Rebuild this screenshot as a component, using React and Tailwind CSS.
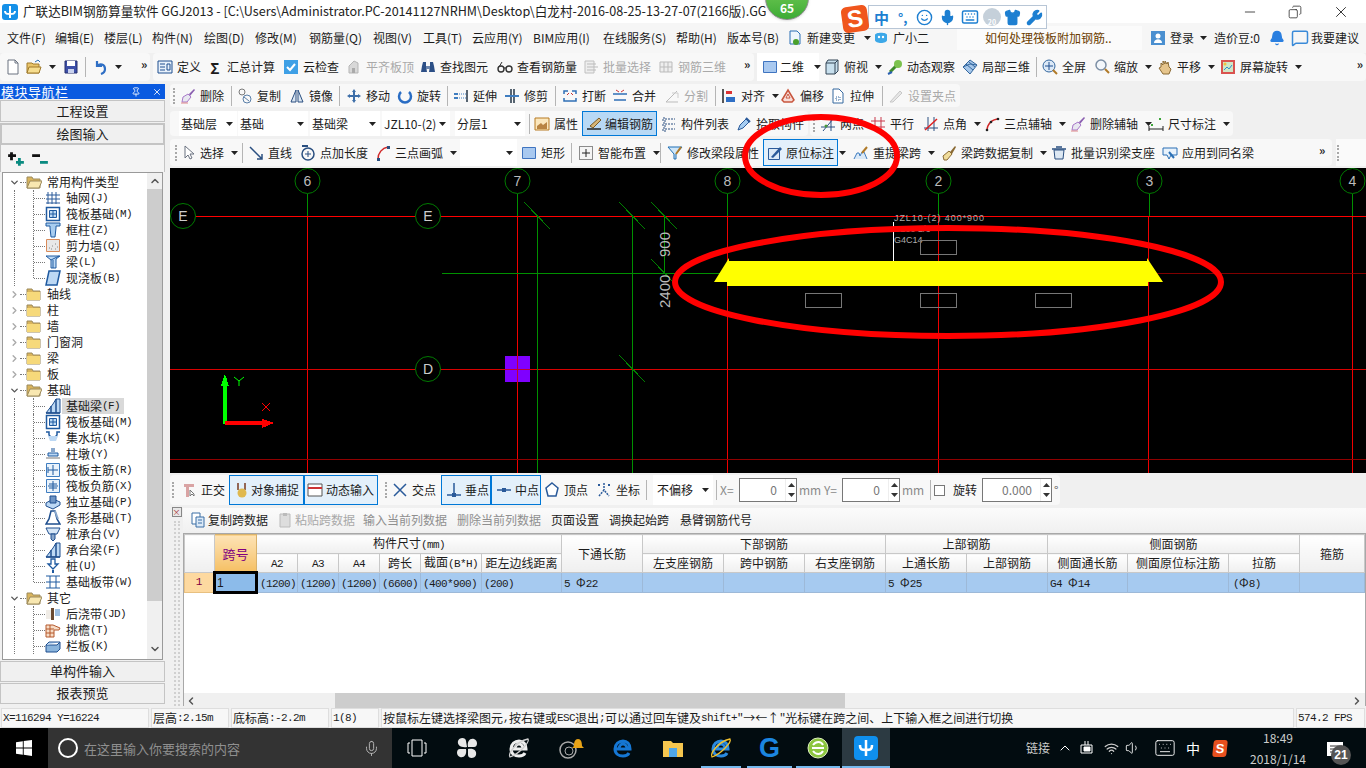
import React from 'react';
import { Smile, Mic, Keyboard, Shirt, Wrench, Bell, Wifi, Volume1, ChevronUp, ChevronDown, ChevronLeft, ChevronRight, Copy, Minus, X, Pin, MessageSquare } from 'lucide-react';

const B = '#2f6fb5', D = '#1f4f8f';
const ICONS = {
  new: <><path d="M3 1h7l3 3v11H3z" fill="#fff" stroke="#6b7280"/><path d="M10 1v3h3" fill="none" stroke="#6b7280"/></>,
  open: <><path d="M1 4h5l1 1h6v9H1z" fill="#e9c46a" stroke="#a07a2c"/><path d="M3 8h12l-2 6H1z" fill="#f6dd8f" stroke="#a07a2c"/><path d="M9 3l3-2 2 2" fill="none" stroke={B}/></>,
  save: <><path d="M2 2h12v12H2z" fill="#3d4fa8" stroke="#26306e"/><path d="M4 2h8v5H4z" fill="#fff"/><path d="M5 10h6v4H5z" fill="#c9d2ee"/></>,
  undo: <path d="M5 2v5h5M5 7c3-3 8-2 8 3 0 2-1 4-4 5" fill="none" stroke="#2f6fc5" strokeWidth="2.2"/>,
  def: <><path d="M1 2h14v12H1z" fill="#e8f1fb" stroke={D}/><path d="M3 5h5M3 8h5M3 11h5M10 5h3v6h-3z" fill="none" stroke={D}/></>,
  cloud: <><path d="M1 1h14v14H1z" fill="#3fa0e6" rx="2"/><path d="M4 8l3 3 5-6" fill="none" stroke="#fff" strokeWidth="2"/></>,
  flush: <><path d="M3 7l5-5 4 2v10H3z" fill="#d8d8d8" stroke="#b5b5b5"/><path d="M6 9h3v5H6z" fill="#aaa"/></>,
  binoc: <><path d="M3 3h3v4l1 6H1l1-6zM10 3h3l1 4 1 6H9l1-6z" fill="#2c4f86"/><path d="M6 7h4v3H6z" fill="#6d86ad"/></>,
  glass: <><circle cx="4" cy="10" r="3" fill="none" stroke="#333" strokeWidth="1.4"/><circle cx="12" cy="10" r="3" fill="none" stroke="#333" strokeWidth="1.4"/><path d="M7 9h2M2 8l3-5" stroke="#333" fill="none"/></>,
  batch: <><path d="M2 2h9v12H2z" fill="#eee" stroke="#c0c0c0"/><path d="M4 5h9M4 8h11M4 11h9" stroke="#bbb"/></>,
  r3d: <path d="M2 3h12v10H2zM6 3v10M10 3v10M2 8h12" fill="#eee" stroke="#bbb"/>,
  v2d: <path d="M1.500 2.500h13v11h-13z" fill="#a9c9f0" stroke="#3f74c0"/>,
  box: <><path d="M4 1h10v11l-3 3H2V4z" fill="#c8e0ee" stroke="#345"/><path d="M2 4h9v11M11 4l3-3" fill="none" stroke="#345"/></>,
  orbit: <><path d="M3 13L13 3" stroke="#3e8a2c" strokeWidth="3"/><circle cx="11" cy="5" r="4" fill="#7cc24e"/><path d="M1 15l4-2" stroke="#2a5fb0" strokeWidth="2"/></>,
  cube: <><path d="M8 1l7 5-7 9-7-7z" fill="#a6c7ea" stroke="#35689f"/><path d="M4 5l7 6M7 3l6 5M1 8l7-3 7 1" stroke="#35689f" fill="none"/></>,
  full: <><circle cx="7" cy="7" r="6" fill="#dce9f7" stroke="#35689f"/><path d="M7 3v8M3 7h8" stroke="#1f4f8f"/><path d="M11 11l4 4" stroke="#b07a28" strokeWidth="2"/></>,
  zoom: <><circle cx="7" cy="6" r="5" fill="#f3f7fb" stroke="#7c8fa5" strokeWidth="1.500"/><path d="M11 10l4 4" stroke="#b07a28" strokeWidth="2"/></>,
  pan: <path d="M4 8V4l2 2V2l2 3V2l2 3 1-2 1 5 2 2-2 5H6L2 9z" fill="#e6c58c" stroke="#8a6a34"/>,
  rot: <><path d="M2 2h12v12H2z" fill="#cfe7c7" stroke="#d9534f" strokeWidth="2"/><path d="M4 11l3-3 2 2 3-4" stroke="#2f8fce" fill="none"/><circle cx="5" cy="5" r="1.500" fill="#f0c040"/></>,
  erase: <><path d="M9 6l5-5 1 1-5 6z" fill="#8a5fb0"/><path d="M3 9l5-3 3 3-4 5H2z" fill="#e8e8f0" stroke="#a879c9"/><path d="M1 15h7" stroke="#d88"/></>,
  copy: <><circle cx="5" cy="4" r="3" fill="none" stroke="#7a7a7a"/><circle cx="10" cy="11" r="4" fill="none" stroke="#5a7fa8"/><path d="M7 9l5 4" stroke="#5a7fa8"/></>,
  mirror: <path d="M7 2L2 14h5zM9 2l5 12H9z" fill="#dbe6f2" stroke="#2a4f80"/>,
  move: <path d="M8 1l2 3H9v3h3V6l3 2-3 2V9H9v3h1l-2 3-2-3h1V9H4v1L1 8l3-2v1h3V4H6z" fill="#3d6ea8"/>,
  rot2: <path d="M12 4a6 6 0 1 1-8 0" fill="none" stroke="#2a6dc4" strokeWidth="2.500"/>,
  extend: <><path d="M14 2v12" stroke="#234" strokeWidth="1.500"/><path d="M1 5h4v2H1zM1 9h4v2H1z" fill="#3f7dc0"/><path d="M6 6h7M6 10h7" stroke="#3f7dc0" strokeDasharray="1 1"/></>,
  trim: <><path d="M7 1v14M10 1v14" stroke="#234" strokeWidth="1.500"/><path d="M1 8h14" stroke="#3f7dc0" strokeWidth="2"/></>,
  brk: <><path d="M2 6V3h4M10 3h4v3M2 10v3h12v-3" fill="none" stroke={B} strokeWidth="1.500"/><path d="M5 7l2-2M11 7L9 5" stroke="#c33"/></>,
  mrg: <><path d="M1 6h14M2 12h12" stroke={B} strokeWidth="1.500"/><path d="M4 2l3 2M12 2L9 4" stroke="#c33"/></>,
  split: <><path d="M2 14L13 3M2 14h12" stroke="#bbb" fill="none"/><path d="M8 5h6v5" stroke="#ccc" fill="none"/></>,
  align: <><path d="M2 1v14" stroke="#222" strokeWidth="1.500"/><path d="M5 3h6v3H5z" fill="#d33"/><path d="M5 9h9v5H5z" fill="#2f6fc5"/></>,
  offset: <><path d="M8 2l6 10-2 2H4l-2-2z" fill="#f7dcd8" stroke="#c8553d" strokeWidth="1.500"/><path d="M8 6l2 4H6z" fill="#fff" stroke="#c8553d"/></>,
  stretch: <><path d="M3 1h6l4 4v10H3z" fill="#fff" stroke="#35689f"/><path d="M6 9h4v3H6z" fill="none" stroke="#35689f" strokeDasharray="1 1"/></>,
  grip2: <path d="M2 14L12 3l2 2L5 14z" fill="#e6e6e6" stroke="#c8c8c8"/>,
  attr: <><path d="M1 2h14v12H1z" fill="#fbe7bd" stroke="#b77b23"/><path d="M3 10l4-3 2 2 4-3v7H3z" fill="#b98443"/></>,
  edit: <><path d="M1 13h14" stroke="#222" strokeWidth="1.500"/><path d="M4 10L13 2l2 2-8 8z" fill="#d7b676" stroke="#7a5a26"/></>,
  list: <path d="M2 2h3v3H2zM7 3h7M2 7h3v3H2zM7 8h7M2 12h3v3H2zM7 13h7" fill="none" stroke="#2a4f80" strokeDasharray="2 1"/>,
  pick: <><path d="M2 14l2-5 6-6 3 3-6 6z" fill="#a6cdf2" stroke="#2a5a9a"/><path d="M10 2l4 4" stroke="#2a5a9a" strokeWidth="2"/></>,
  two: <><path d="M1 11h14M11 1v14M3 15L13 3" stroke="#2a4f80"/><circle cx="6" cy="10" r="1.500" fill="#4a9a3a"/></>,
  para: <path d="M5 1v14M11 1v14M1 5h14M1 11h14" stroke="#c8384a"/>,
  angle: <><path d="M5 1v14M11 1v14M1 12h14" stroke="#2a4f80"/><path d="M2 14L14 3" stroke="#e02020" strokeWidth="1.500"/></>,
  arc3: <><path d="M3 15C3 8 8 3 15 3" fill="none" stroke="#d02828" strokeWidth="1.500"/><circle cx="3" cy="14" r="1.300" fill="#222"/><circle cx="7" cy="6" r="1.300" fill="#222"/><circle cx="14" cy="3" r="1.300" fill="#222"/></>,
  dim: <><path d="M1 10v5M15 10v5M1 13h14" stroke="#222" fill="none"/><path d="M3 8h2v2H3zM11 2h2v2h-2z" fill="#3da53a"/></>,
  cursor: <path d="M5 1v12l3-3 2 4 2-1-2-4h4z" fill="#fff" stroke="#6b7280"/>,
  line: <path d="M2 2l12 12M14 9v5H9" fill="none" stroke="#2a4f80" strokeWidth="1.500"/>,
  ptl: <><circle cx="8" cy="9" r="6" fill="none" stroke="#2a4f80" strokeWidth="1.500"/><path d="M8 6v6M5 9h6" stroke="#2a4f80"/><path d="M2 1h6" stroke="#2a4f80" strokeWidth="2"/></>,
  arc: <><path d="M3 14C3 8 7 3 13 2" fill="none" stroke="#d02828" strokeWidth="1.500"/><path d="M2 13h3v3H2zM12 1h3v3h-3z" fill="#2a4f80"/></>,
  smart: <><path d="M1.500 1.500h13v13h-13z" fill="#f5f5f5" stroke="#222" strokeDasharray="1 1"/><path d="M8 4v8M4 8h8" stroke="#222"/></>,
  modify: <><path d="M1 2h14L9 9v5H7V9z" fill="#cfe6f8" stroke="#1e6fb5"/><path d="M9 9l5-7" stroke="#b07a28" strokeWidth="2"/></>,
  origin: <><path d="M1.500 3.500h11v11h-11z" fill="#dbe9f7" stroke="#2a5a9a"/><path d="M4 12L13 2l2 2-9 9z" fill="#2a5a9a"/></>,
  reuse: <><path d="M1 14l3-6h2l1 3 2-4h2l3 7" fill="#dbe9f7" stroke="#3f7dc0"/><path d="M9 8l5-6" stroke="#b07a28" strokeWidth="2"/></>,
  brush: <><path d="M9 7l5-6 1 1-4 7z" fill="#8a6a34"/><path d="M2 11l6-5 3 3-5 6H3z" fill="#f0dc9a" stroke="#8a6a34"/></>,
  batchid: <><path d="M3 5h10l-1 9H4z" fill="#dde8f3" stroke="#2a4f80"/><path d="M1 4h14M5 2h6" stroke="#2a4f80" strokeWidth="1.500"/></>,
  apply: <><path d="M1 3h14v7H9l-2 4-2-4H1z" fill="#e8f2fb" stroke="#2a6fb5"/><path d="M7 7l5 6" stroke="#2a6fb5" strokeWidth="2"/></>,
  ortho: <><path d="M3 2h10v3H8v10H5V5H3z" fill="#d9a3a3"/><path d="M9 8v6l2-2 2 2v-2l-2-2z" fill="#fff" stroke="#777"/></>,
  snap: <><path d="M5 1v7M12 1v7" stroke="#7a3a20" strokeWidth="1.500"/><circle cx="9" cy="11" r="4.500" fill="#e0b94f"/></>,
  dyn: <><path d="M1 2h14v12H1z" fill="#fff" stroke="#555"/><path d="M1 6h14" stroke="#c33" strokeWidth="2"/></>,
  cross: <path d="M2 2l12 12M14 2L2 14" stroke="#2a5a9a" strokeWidth="1.500"/>,
  perp: <><path d="M8 1v12M1 13h14" stroke="#2a5a9a" strokeWidth="1.500"/><path d="M6 11h4v4H6z" fill="#2a5a9a"/></>,
  mid: <><path d="M1 8h14" stroke="#2a5a9a" strokeWidth="1.500"/><path d="M6 6h4v4H6z" fill="#2a5a9a"/></>,
  vert: <path d="M8 1l6 5-2 8H4L2 6z" fill="#fff" stroke="#2a5a9a" strokeWidth="1.500"/>,
  coord: <><path d="M3 14L8 8l5 6M8 1v7" fill="none" stroke="#2a5a9a" strokeDasharray="2 1" strokeWidth="1.500"/><path d="M2 2h2v2H2zM12 2h2v2h-2z" fill="#2a5a9a"/></>,
  doc: <><path d="M3 1h7l3 3v10H3z" fill="#eef5fc" stroke="#2a6fb5"/><circle cx="9" cy="12" r="3" fill="#4aa02c"/></>,
  bot: <><path d="M2 5c0-3 12-3 12 0v5c0 4-12 4-12 0z" fill="#3ca8e8"/><circle cx="6" cy="7" r="1.200" fill="#fff"/><circle cx="10" cy="7" r="1.200" fill="#fff"/></>,
  user: <><path d="M1 1h14v14H1z" fill="#4a8fd0"/><circle cx="8" cy="6" r="2.500" fill="#fff"/><path d="M4 13c0-5 8-5 8 0z" fill="#fff"/></>,
  paste: <><path d="M3 2h10v13H3z" fill="#ddd" stroke="#bbb"/><path d="M6 1h4v3H6z" fill="#bbb"/></>,
  copy2: <><path d="M2 1h8v11H2z" fill="#fff" stroke="#3a6ea5"/><path d="M6 5h8v10H6z" fill="#dbe9f7" stroke="#3a6ea5"/><path d="M8 8h4M8 11h4" stroke="#3a6ea5"/></>,
  grid: <path d="M3 2v12M7 2v12M11 2v12M1 5h14M1 9h14M1 13h14" stroke="#2a5a9a" fill="none"/>,
  raft: <><path d="M1.500 1.500h13v13h-13z" fill="#fff" stroke="#1f5aa0" strokeWidth="1.500"/><path d="M4.500 4.500h7v7h-7z" fill="#bcd8f4" stroke="#1f5aa0"/><path d="M8 4v8M4 8h8" stroke="#1f5aa0"/></>,
  col: <path d="M1 1h14v3h-4v2l-1 9H6L5 6V4H1z" fill="#a8cdf0" stroke="#1f5aa0"/>,
  wall: <><path d="M1.500 1.500h13v12h-13z" fill="#e8e8e8" stroke="#d98b5a"/><path d="M4 10h1M7 8h1M10 11h1M6 11h1M10 6h1M12 9h1" stroke="#888"/></>,
  beam: <><path d="M1 2h14l-4 3v9H6V6z" fill="#bcd8f4" stroke="#1f5aa0"/><path d="M6 6l8-4M8 6v8" stroke="#1f5aa0"/></>,
  slab: <path d="M4 1h11l-3 14H1z" fill="#bcd8f4" stroke="#1f5aa0" strokeWidth="1.500"/>,
  fbeam: <><path d="M1 15L8 6l3-5h4v14z" fill="#bcd8f4" stroke="#1f4f8f"/><path d="M1 15h14M6 15V8M11 1v14" stroke="#1f4f8f" strokeWidth="1.500"/></>,
  pit: <><path d="M1 2h3v3l2 2h4l2-2V2h3" fill="none" stroke="#1f5aa0" strokeWidth="1.500"/><path d="M3 6l2 5h6l2-5" fill="#bcd8f4"/></>,
  pier: <><path d="M6 2h4v4H6z" fill="#8aa8cc"/><path d="M3 7h10v3H3z" fill="#bcd8f4" stroke="#1f5aa0"/><path d="M1 11h14v2H1z" fill="#bbb"/></>,
  rr: <><path d="M1.500 1.500h13v13h-13z" fill="#eaf3fb" stroke="#3f7dc0"/><path d="M8 3v10M3 8h10M3 5v6" stroke="#1f5aa0"/></>,
  rn: <><path d="M1.500 1.500h13v13h-13z" fill="#eaf3fb" stroke="#3f7dc0"/><path d="M8 3v10M3 8h10M4 6h8M4 10h8" stroke="#1f5aa0"/></>,
  iso: <><path d="M1 9l7-4 7 3v3l-7 4-7-3z" fill="#bcd8f4" stroke="#1f4f8f"/><path d="M5 2h6v7H5z" fill="#6d94c4" stroke="#1f4f8f"/></>,
  strip: <><path d="M6 1h4l2 8 3 5H1l3-5z" fill="#fff" stroke="#1f4f8f" strokeWidth="1.500"/><path d="M10 1l3 8" stroke="#8aa8cc" strokeWidth="2"/></>,
  cap: <><path d="M1 2h14l-3 6H4z" fill="#d7e7f7" stroke="#1f4f8f"/><path d="M6 8h4v5l-2 2-2-2z" fill="#8aa8cc" stroke="#1f4f8f"/></>,
  pile: <><path d="M6 1h4v5h3l-5 5-5-5h3z" fill="#fff" stroke="#1f5aa0" strokeWidth="1.300"/><path d="M7 12h2v3H7z" fill="#1f5aa0"/></>,
  band: <path d="M1 2h14M1 14h14M5 2v12M11 2v12M1 8h14" stroke="#1f5aa0" fill="none"/>,
  post: <><path d="M1 4h6v9H1z" fill="#f0ece6"/><path d="M6 2h3v12H6z" fill="#6b4a30"/><path d="M10 3h5v7h-5z" fill="#9fbfe0"/></>,
  eave: <><path d="M1 3h7l7 3-1 2H9v7H1z" fill="#f6dcc6" stroke="#b5582c"/><path d="M1 7h8M1 11h8M5 3v12" stroke="#b5582c"/></>,
  rail: <><path d="M1 7h11l3-3v7l-3 3H1z" fill="#8ab4dc" stroke="#1f4f8f"/><path d="M1 7l3-3h11" fill="#bcd8f4" stroke="#1f4f8f"/></>,
};
const Ic = ({ n }) => <svg viewBox="0 0 16 16" className="w-4 h-4 shrink-0 block">{ICONS[n]}</svg>;
const Caret = ({ cls = 'ml-[5px]' }) => <svg viewBox="0 0 7 4" className={`w-[7px] h-1 shrink-0 ${cls}`}><path d="M0 0h7L3.500 4z" fill="#222" /></svg>;
const Grip = ({ cls = '' }) => <div className={`w-0.5 h-4 shrink-0 border-l-2 border-dotted border-[#a8a8a8] ${cls}`} />;
const Sep = ({ cls = 'mx-[3px]' }) => <div className={`w-px h-5 shrink-0 bg-[#b5b5b5] ${cls}`} />;
const More = ({ cls = '' }) => <span className={`text-[12px] leading-none font-bold shrink-0 -mt-1.5 ${cls}`}>»</span>;

const T = ({ i, t, w, c, g, cls = '' }) => (
  <div className={`flex items-center h-full shrink-0 gap-1 whitespace-nowrap ${w} ${g ? 'text-[#a9a9a9]' : ''} ${cls}`}>
    {i && <Ic n={i} />}
    {t && <span>{t}</span>}
    {c && <Caret cls="ml-[3px]" />}
  </div>
);
const Combo = ({ t, w, cls = '' }) => (
  <div className={`flex items-center justify-between h-full bg-white shrink-0 pl-0.5 pr-1 ${w} ${cls}`}><span>{t}</span><Caret cls="" /></div>
);
const Group = ({ children, cls = '' }) => <div className={`flex items-center bg-[#f8f8f8] rounded-sm h-full ${cls}`}>{children}</div>;

const Sim = ({ t }) => t.split(/([\x20-\x7e]+)/).map((p, k) => /^[\x20-\x7e]+$/.test(p)
  ? <span key={k} className="font-['Liberation_Mono',monospace] text-[11px] tracking-[-0.6px] whitespace-pre">{p}</span>
  : <span key={k}>{p}</span>);

const Folder = ({ open }) => (
  <svg viewBox="0 0 16 14" className="w-4 h-3.5 shrink-0">
    <path d="M1 2h5l1 2h7v9H1z" fill="#d9b45c" stroke="#9c8a5c" />
    {open ? <path d="M4 6h12l-3 7H1z" fill="#f8e7b0" stroke="#9c8a5c" /> : <path d="M1 5h13v8H1z" fill="#f6d97a" />}
  </svg>
);
const FolderRow = ({ t, open }) => (
  <div className="flex items-center h-4">
    <div className="w-1.5 shrink-0" />
    {open ? <ChevronDown size={11} strokeWidth={3} className="text-[#555] shrink-0" /> : <ChevronRight size={11} strokeWidth={3} className="text-[#aaa] shrink-0" />}
    <div className="w-1.5 border-t border-dotted border-[#777] shrink-0" />
    <Folder open={open} />
    <span className="ml-[5px]">{t}</span>
  </div>
);
const Leaf = ({ i, t, last, sel }) => (
  <div className="flex items-center h-4">
    <div className="w-[12px] h-full shrink-0 border-r border-dotted border-[#777]" />
    {last
      ? <div className="w-[19px] h-2 self-start shrink-0 border-r border-dotted border-[#777]" />
      : <div className="w-[19px] h-full shrink-0 border-r border-dotted border-[#777]" />}
    <div className="w-[11px] border-t border-dotted border-[#777] shrink-0" />
    <Ic n={i} />
    <span className={`ml-[1px] pl-[4px] pr-1 h-4 flex items-center whitespace-nowrap ${sel ? 'bg-[#d9d9d9]' : ''}`}><Sim t={t} /></span>
  </div>
);
const PBtn = ({ t, cls = '' }) => (
  <div className={`flex items-center justify-center bg-[#f0f0f0] border border-[#c4c4c4] text-[13px] pb-0.5 ${cls}`}>{t}</div>
);

const Input = ({ v, w }) => (
  <div className={`h-6 bg-white border border-[#777] flex items-center justify-end shrink-0 text-[#777] ${w}`}>
    <span className="mr-2">{v}</span>
    <div className="w-[11px] h-full flex flex-col items-center justify-center gap-1.5 border-l border-[#eee]">
      <svg viewBox="0 0 7 4" className="w-[7px] h-1"><path d="M0 4h7L3.500 0z" fill="#333" /></svg>
      <svg viewBox="0 0 7 4" className="w-[7px] h-1"><path d="M0 0h7L3.500 4z" fill="#333" /></svg>
    </div>
  </div>
);

const Hd = ({ t, cls = '', ...r }) => (
  <th {...r} className={`font-normal border border-[#c8c8c8] bg-linear-to-b from-white to-[#efefef] p-0 text-center align-middle whitespace-nowrap overflow-hidden ${cls}`}><Sim t={t} /></th>
);
const Td = ({ t = '', cls = '' }) => (
  <td className={`border border-[#9db9d8] bg-[#a6caf0] p-0 pl-[2px] text-left whitespace-nowrap overflow-hidden ${cls}`}><Sim t={t} /></td>
);

const Canvas = () => {
  const ax = [[307, '6'], [517, '7'], [727, '8'], [938, '2'], [1149, '3'], [1352, '4']];
  const ticks = [[537, 216], [632, 216], [664, 216], [664, 273], [632, 369]];
  return (
    <svg viewBox="170 168 1196 305" className="w-full h-full block bg-black" shapeRendering="crispEdges">
      <path d="M307.500 216V473M517.500 216V473M727.500 216V473M938.500 216V473M1148.500 216V473M1352.500 216V473" stroke="#f00000" />
      <path d="M170 216.500H1366" stroke="#ff0000" strokeWidth="1" />
      <path d="M170 369.500H1366" stroke="#d80000" />
      <path d="M170 459.500H1366" stroke="#900000" />
      <path d="M537.500 216V473M632.500 216V473M664.500 216V273" stroke="#009000" />
      <path d="M442 273.500H727" stroke="#009000" />
      <path d="M727 273.500H1150" stroke="#6a6a6a" />
      <path d="M1150 273.500H1366" stroke="#800000" />
      {ax.map(([x]) => <path key={x} d={`M${x + 0.5} 194V216`} stroke="#009000" />)}
      {ticks.map(([x, y]) => <path key={x + '' + y} d={`M${x - 13} ${y - 14}L${x + 13} ${y + 13}`} stroke="#008000" />)}
      <g shapeRendering="auto">
        {ax.map(([x, l]) => (
          <g key={x}>
            <circle cx={x + 0.5} cy="181" r="12.500" fill="#000" stroke="#007a00" />
            <text x={x + 0.5} y="186" textAnchor="middle" fontSize="14" fill="#bbb" fontFamily="Liberation Sans">{l}</text>
          </g>
        ))}
        {[[183, 216, 'E'], [428, 216, 'E'], [428, 369, 'D']].map(([x, y, l]) => (
          <g key={x + l}>
            <circle cx={x} cy={y} r="12.500" fill="#000" stroke="#007a00" />
            <text x={x} y={y + 5} textAnchor="middle" fontSize="14" fill="#ccc" fontFamily="Liberation Sans">{l}</text>
          </g>
        ))}
        <text transform="translate(670 257) rotate(-90)" fontSize="15" fill="#bbb" fontFamily="Liberation Sans">900</text>
        <text transform="translate(670 308) rotate(-90)" fontSize="15" fill="#bbb" fontFamily="Liberation Sans">2400</text>
        <text x="894" y="221" fontSize="9" fill="#aaa" fontFamily="Liberation Sans" textLength="90">JZL10-(2)  400*900</text>
        <text x="894" y="232" fontSize="9" fill="#aaa" fontFamily="Liberation Sans">C200  2/6</text>
        <text x="894" y="243" fontSize="9" fill="#aaa" fontFamily="Liberation Sans">G4C14</text>
      </g>
      <rect x="505" y="356" width="25" height="26" fill="#7f00ff" />
      <path d="M517.500 356V382M505 369.500H530" stroke="#c00030" />
      <path d="M893.500 222V261" stroke="#fff" />
      <rect x="727" y="261" width="421" height="25" fill="#ff0" />
      <path d="M714 282L729 258V282zM1147 258L1163 282H1147z" fill="#ff0" shapeRendering="auto" />
      <g fill="none" stroke="#777">
        <rect x="920.500" y="240.500" width="36" height="14" />
        <rect x="805.500" y="293.500" width="36" height="14" />
        <rect x="920.500" y="293.500" width="36" height="14" />
        <rect x="1035.500" y="293.500" width="36" height="14" />
      </g>
      <rect x="223" y="378" width="4" height="46" fill="#0f0" />
      <path d="M225 374l4 12h-8z" fill="#0f0" />
      <rect x="225" y="421" width="40" height="4" fill="#f00" />
      <path d="M274 423l-12 5v-9z" fill="#f00" />
      <g shapeRendering="auto">
        <path d="M234 377l5 4 5-4M239 381v5" stroke="#0f0" fill="none" />
        <path d="M262 403l8 8M270 403l-8 8" stroke="#f00" fill="none" />
      </g>
    </svg>
  );
};

const TaskIcon = ({ children, cls = 'w-[49px]' }) => <div className={`h-full flex items-center justify-center shrink-0 ${cls}`}>{children}</div>;
const IeGlyph = ({ c, ring }) => (
  <svg viewBox="0 0 24 24" className="w-6 h-6">
    <path d="M5 13h14c0-5-3-8-7-8s-8 3-8 8 4 7 8 7c3 0 5-1 6-3M8 13c0-3 2-5 4-5s4 2 4 5" fill="none" stroke={c} strokeWidth="3" />
    {ring && <path d="M21 3C23 6 12 18 3 21 1 18 8 6 21 3z" fill="none" stroke={ring} strokeWidth="1.300" />}
  </svg>
);

export default function App() {
  return (
    <div className="relative w-[1366px] h-[768px] overflow-hidden flex flex-col bg-[#f0f0f0] text-[12px] leading-none text-[#1c1c1c] font-['Noto_Sans_CJK_SC','Noto_Sans',sans-serif]">
      {/* title */}
      <div className="h-[23px] shrink-0 bg-white flex items-center pl-[2px] text-[12.600px] text-[#222] whitespace-nowrap overflow-hidden">
        <svg viewBox="0 0 16 16" className="w-4 h-4 shrink-0"><rect width="16" height="16" rx="3" fill="#1490e8" /><path d="M8 2v12M3 7c0 3 2 3 5 3s5 0 5-3" fill="none" stroke="#fff" strokeWidth="2" /></svg>
        <span className="ml-[5px] w-[743px] shrink-0 overflow-hidden">广联达BIM钢筋算量软件 GGJ2013 - [C:\Users\Administrator.PC-20141127NRHM\Desktop\白龙村-2016-08-25-13-27-07(2166版).GGJ12]</span>
        <Minus size={16} strokeWidth={1.2} className="ml-[476px] shrink-0" />
        <Copy size={14} strokeWidth={1.3} className="ml-[30px] shrink-0 -scale-x-100 text-[#222]" />
        <X size={18} strokeWidth={1.2} className="ml-[30px] shrink-0" />
      </div>
      {/* menu */}
      <div className="h-[30px] shrink-0 bg-[#f6f6f6] flex items-center whitespace-nowrap">
        <div className="flex items-center pl-[7px] w-[787px] shrink-0">
          {[['文件(F)', 'w-[48px]'], ['编辑(E)', 'w-[49px]'], ['楼层(L)', 'w-[48px]'], ['构件(N)', 'w-[52px]'], ['绘图(D)', 'w-[51px]'], ['修改(M)', 'w-[54px]'], ['钢筋量(Q)', 'w-[64px]'], ['视图(V)', 'w-[50px]'], ['工具(T)', 'w-[49px]'], ['云应用(Y)', 'w-[61px]'], ['BIM应用(I)', 'w-[70px]'], ['在线服务(S)', 'w-[73px]'], ['帮助(H)', 'w-[51px]'], ['版本号(B)', 'w-[60px]']].map(([t, w]) => <span key={t} className={`${w} shrink-0`}>{t}</span>)}
        </div>
        <div className="flex items-center h-full w-[86px] shrink-0 gap-1"><Ic n="doc" /><span>新建变更</span><Caret cls="ml-[5px]" /></div>
        <div className="flex items-center h-full w-[84px] shrink-0 gap-1"><Ic n="bot" /><span>广小二</span></div>
        <div className="h-6 w-[185px] bg-[#fbfbfb] shrink-0 flex items-center pl-[28px] text-[#6b3d00]">如何处理筏板附加钢筋..</div>
        <div className="flex items-center h-full ml-[8px] gap-1">
          <Ic n="user" /><span>登录</span><Caret cls="ml-[2px]" />
          <span className="ml-[3px]">造价豆:0</span>
          <Bell size={16} fill="#2a7fe0" stroke="#2a7fe0" className="ml-[5px] shrink-0" />
          <MessageSquare size={18} stroke="#3a8ad8" className="ml-[2px] shrink-0" />
          <span className="-ml-0.5">我要建议</span>
        </div>
      </div>
      {/* toolbar 1 */}
      <div className="h-[28px] shrink-0 flex items-center gap-[3px] whitespace-nowrap">
        <Group cls="w-[150px] pl-[5px]">
          <T i="new" w="w-[21px]" />
          <T i="open" w="w-[37px]" c />
          <T i="save" w="w-[21px]" />
          <Sep cls="ml-[1px] mr-[6px]" />
          <T i="undo" w="w-[36px]" c />
          <More cls="ml-[13px]" />
        </Group>
        <Group cls="w-[601px] pl-[4px]">
          <T i="def" t="定义" w="w-[50px]" />
          <div className="flex items-center w-[76px] shrink-0 h-full"><span className="w-[16px] text-center text-[15px] font-bold">Σ</span><span className="ml-1">汇总计算</span></div>
          <T i="cloud" t="云检查" w="w-[63px]" />
          <T i="flush" t="平齐板顶" g w="w-[74px]" />
          <T i="binoc" t="查找图元" w="w-[77px]" />
          <T i="glass" t="查看钢筋量" w="w-[86px]" />
          <T i="batch" t="批量选择" g w="w-[75px]" />
          <T i="r3d" t="钢筋三维" g w="w-[77px]" />
          <More cls="ml-[9px]" />
        </Group>
        <Group cls="flex-1">
          <div className="flex items-center h-full w-[62px] bg-white pl-[5px] shrink-0 gap-1"><Ic n="v2d" /><span className="-ml-0.5">二维</span><Caret cls="ml-[6px]" /></div>
          <T i="box" t="俯视" c w="w-[63px]" cls="ml-[5px]" />
          <T i="orbit" t="动态观察" w="w-[75px]" />
          <T i="cube" t="局部三维" w="w-[74px]" />
          <Sep cls="ml-0 mr-[5px]" />
          <T i="full" t="全屏" w="w-[52px]" />
          <T i="zoom" t="缩放" c w="w-[63px]" />
          <T i="pan" t="平移" c w="w-[63px]" />
          <T i="rot" t="屏幕旋转" c w="w-[78px]" />
          <More cls="ml-auto mr-[3px]" />
        </Group>
      </div>
      {/* main */}
      <div className="h-[625px] shrink-0 mt-[3px] flex -mb-[3px]">
        {/* left panel */}
        <div className="w-[165px] shrink-0 flex flex-col">
          <div className="h-[15px] shrink-0 bg-[#0a5ae0] text-white flex items-center pl-px text-[13px]">
            <span className="tracking-[0.5px]">模块导航栏</span>
            <Pin size={10} className="ml-[62px] shrink-0" />
            <X size={10} className="ml-[11px] shrink-0" />
          </div>
          <PBtn t="工程设置" cls="mt-px h-[22px]" />
          <PBtn t="绘图输入" cls="mt-px h-[22px] border-2 border-[#aaa]" />
          <div className="h-[27px] shrink-0 flex items-center gap-[6px] pl-[6px] bg-[#f4f4f4] border-x border-[#c4c4c4]">
            <svg viewBox="0 0 16 14" className="w-[18px] h-4"><path d="M4 1v7M1 4h7" stroke="#111" strokeWidth="2.500" /><path d="M11 6v7M8 10h7" stroke="#0a8a80" strokeWidth="2.500" /></svg>
            <svg viewBox="0 0 16 14" className="w-[18px] h-4"><path d="M1 4h7" stroke="#111" strokeWidth="2.500" /><path d="M8 10h7" stroke="#0a8a80" strokeWidth="2.500" /></svg>
          </div>
          <div className="h-[488px] shrink-0 mx-[2px] border border-[#9a9a9a] bg-white flex overflow-hidden">
            <div className="flex-1 pt-[1px] overflow-hidden text-[12px]">
              <FolderRow t="常用构件类型" open />
              <Leaf i="grid" t="轴网(J)" />
              <Leaf i="raft" t="筏板基础(M)" />
              <Leaf i="col" t="框柱(Z)" />
              <Leaf i="wall" t="剪力墙(Q)" />
              <Leaf i="beam" t="梁(L)" />
              <Leaf i="slab" t="现浇板(B)" last />
              {['轴线', '柱', '墙', '门窗洞', '梁', '板'].map((t, k) => <FolderRow key={k} t={t} />)}
              <FolderRow t="基础" open />
              <Leaf i="fbeam" t="基础梁(F)" sel />
              <Leaf i="raft" t="筏板基础(M)" />
              <Leaf i="pit" t="集水坑(K)" />
              <Leaf i="pier" t="柱墩(Y)" />
              <Leaf i="rr" t="筏板主筋(R)" />
              <Leaf i="rn" t="筏板负筋(X)" />
              <Leaf i="iso" t="独立基础(P)" />
              <Leaf i="strip" t="条形基础(T)" />
              <Leaf i="cap" t="桩承台(V)" />
              <Leaf i="fbeam" t="承台梁(F)" />
              <Leaf i="pile" t="桩(U)" />
              <Leaf i="band" t="基础板带(W)" last />
              <FolderRow t="其它" open />
              <Leaf i="post" t="后浇带(JD)" />
              <Leaf i="eave" t="挑檐(T)" />
              <Leaf i="rail" t="栏板(K)" />
            </div>
            <div className="w-[15px] shrink-0 bg-[#f0f0f0] flex flex-col items-center">
              <ChevronUp size={12} strokeWidth={3} className="h-[16px] shrink-0 text-[#555]" />
              <div className="w-full h-[412px] bg-[#cdcdcd] shrink-0" />
              <div className="flex-1" />
              <ChevronDown size={12} strokeWidth={3} className="h-[20px] shrink-0 text-[#555]" />
            </div>
          </div>
          <PBtn t="单构件输入" cls="mt-[1px] h-[21px]" />
          <PBtn t="报表预览" cls="mt-[1px] h-[21px]" />
        </div>
        {/* right panel */}
        <div className="ml-[5px] flex-1 min-w-0 flex flex-col whitespace-nowrap">
          <div className="h-[23px] shrink-0 flex">
            <Group cls="w-[790px] pl-[3px]">
              <Grip cls="mr-[5px]" />
              <T i="erase" t="删除" w="w-[51px]" /><Sep cls="ml-0 mr-[5px]" />
              <T i="copy" t="复制" w="w-[52px]" />
              <T i="mirror" t="镜像" w="w-[50px]" /><Sep cls="ml-0 mr-[6px]" />
              <T i="move" t="移动" w="w-[51px]" />
              <T i="rot2" t="旋转" w="w-[50px]" /><Sep cls="ml-0 mr-[5px]" />
              <T i="extend" t="延伸" w="w-[51px]" />
              <T i="trim" t="修剪" w="w-[51px]" /><Sep cls="ml-0 mr-[6px]" />
              <T i="brk" t="打断" w="w-[50px]" />
              <T i="mrg" t="合并" w="w-[52px]" />
              <T i="split" t="分割" g w="w-[51px]" /><Sep cls="ml-0 mr-[5px]" />
              <T i="align" t="对齐" c w="w-[59px]" />
              <T i="offset" t="偏移" w="w-[50px]" />
              <T i="stretch" t="拉伸" w="w-[52px]" /><Sep cls="ml-0 mr-[5px]" />
              <T i="grip2" t="设置夹点" g w="w-[72px]" />
            </Group>
          </div>
          <div className="h-[25px] shrink-0 mt-[4px] flex gap-[2px]">
            <Group cls="w-[638px] pl-[9px]">
              <Combo t="基础层" w="w-[58px]" cls="mr-px" />
              <Combo t="基础" w="w-[70px]" cls="mr-[2px]" />
              <Combo t="基础梁" w="w-[70px]" cls="mr-[2px]" />
              <Combo t="JZL10-(2)" w="w-[68px]" cls="mr-[5px]" />
              <Combo t="分层1" w="w-[70px]" cls="mr-[4px]" />
              <Sep cls="mr-[4px]" />
              <T i="attr" t="属性" w="w-[48px]" />
              <div className="flex items-center h-full w-[75px] shrink-0 gap-[3px] pl-[3px] border border-[#0078d7] bg-[#b8d9f5]"><Ic n="edit" /><span>编辑钢筋</span></div>
              <T i="list" t="构件列表" w="w-[75px]" cls="ml-[4px]" />
              <T i="pick" t="拾取构件" w="w-[71px]" />
            </Group>
            <Group cls="w-[423px] pl-[3px]">
              <Grip cls="mr-[5px]" />
              <T i="two" t="两点" w="w-[50px]" />
              <T i="para" t="平行" w="w-[53px]" />
              <T i="angle" t="点角" c w="w-[61px]" />
              <T i="arc3" t="三点辅轴" c w="w-[86px]" />
              <T i="erase" t="删除辅轴" c w="w-[78px]" />
              <T i="dim" t="尺寸标注" c w="w-[83px]" />
            </Group>
          </div>
          <div className="h-[27px] shrink-0 mt-[3px] flex">
            <Group cls="w-[1162px] pl-[5px]">
              <Grip cls="mr-[3px]" />
              <T i="cursor" t="选择" c w="w-[62px]" /><Sep cls="ml-0 mr-[5px]" />
              <T i="line" t="直线" w="w-[52px]" />
              <T i="ptl" t="点加长度" w="w-[75px]" />
              <T i="arc" t="三点画弧" c w="w-[85px]" />
              <Combo t="" w="w-[57px]" cls="mr-[4px]" />
              <T i="v2d" t="矩形" w="w-[50px]" /><Sep cls="ml-0 mr-[6px]" />
              <T i="smart" t="智能布置" c w="w-[82px]" /><Sep cls="ml-0 mr-[6px]" />
              <T i="modify" t="修改梁段属性" w="w-[96px]" />
              <div className="flex items-center h-full w-[75px] shrink-0 gap-[3px] pl-[3px] border border-[#0078d7] bg-[#e3f0fb]"><Ic n="origin" /><span>原位标注</span></div>
              <Caret cls="ml-[1px] mr-[7px]" />
              <T i="reuse" t="重提梁跨" c w="w-[88px]" />
              <T i="brush" t="梁跨数据复制" c w="w-[110px]" />
              <T i="batchid" t="批量识别梁支座" w="w-[111px]" />
              <T i="apply" t="应用到同名梁" w="w-[96px]" />
              <More cls="ml-[61px]" />
            </Group>
            <div className="ml-[4px] flex-1 bg-[#fafafa] flex items-center pl-[1px]"><Grip /></div>
          </div>
          <div className="h-[305px] shrink-0 mt-[2px]"><Canvas /></div>
          <div className="h-[32px] shrink-0 flex items-start pt-[2px]">
            <Group cls="h-[25px] w-[890px] pl-[2px]">
              <Grip cls="mr-[7px]" />
              <T i="ortho" t="正交" w="w-[48px]" />
              <div className="flex items-center h-full w-[75px] shrink-0 gap-0.5 pl-[3px] border border-[#0078d7] bg-[#e3f0fb]"><Ic n="snap" /><span>对象捕捉</span></div>
              <div className="flex items-center h-full w-[74px] shrink-0 gap-[3px] pl-[2px] border border-[#0078d7] bg-[#e3f0fb]"><Ic n="dyn" /><span>动态输入</span></div>
              <Grip cls="ml-[7px] mr-[5px]" />
              <T i="cross" t="交点" w="w-[49px]" />
              <div className="flex items-center h-full w-[50px] shrink-0 gap-[3px] pl-1 border border-[#0078d7] bg-[#e3f0fb]"><Ic n="perp" /><span>垂点</span></div>
              <div className="flex items-center h-full w-[50px] shrink-0 gap-[3px] pl-1 border border-[#0078d7] bg-[#e3f0fb]"><Ic n="mid" /><span>中点</span></div>
              <T i="vert" t="顶点" w="w-[52px]" cls="ml-[3px]" />
              <T i="coord" t="坐标" w="w-[50px]" />
              <Sep cls="ml-0 mr-[6px]" />
              <Combo t="不偏移" w="w-[60px]" cls="mr-[3px] pl-1" />
              <Sep cls="mr-[3px] ml-0" />
              <span className="text-[#8a8a8a] w-[19px] shrink-0 text-[12px]">X=</span>
              <Input v="0" w="w-[58px]" />
              <span className="text-[#8a8a8a] w-[25px] shrink-0 ml-[2px] text-[12px]">mm</span>
              <span className="text-[#8a8a8a] w-[18px] shrink-0 text-[12px]">Y=</span>
              <Input v="0" w="w-[58px]" />
              <span className="text-[#8a8a8a] w-[27px] shrink-0 ml-[2px] text-[12px]">mm</span>
              <Sep cls="ml-[1px] mr-[3px]" />
              <div className="w-[11px] h-[11px] border border-[#777] bg-white shrink-0 mr-[8px]" />
              <span className="w-[29px] shrink-0">旋转</span>
              <Input v="0.000" w="w-[70px]" />
              <span className="ml-[2px] text-[#555]">°</span>
            </Group>
          </div>
          {/* grid area */}
          <div className="flex-1 min-h-0 flex text-[12px]">
            <div className="w-[13px] shrink-0 flex flex-col items-center pt-[2px]">
              <div className="w-[10px] h-[10px] border border-[#888] bg-[#e8e8e8] text-[8px] flex items-center justify-center text-[#a33]">×</div>
              <div className="mt-1 w-1.5 flex-1 border-x-2 border-dotted border-[#d0d0d0]" />
            </div>
            <div className="flex-1 min-w-0 flex flex-col">
              <div className="h-[23px] mt-[3px] shrink-0 bg-linear-to-b from-[#fbfbfb] to-[#f1f1f1] flex items-center pl-[7px]">
                <div className="flex items-center w-[87px] shrink-0 gap-[2px]"><Ic n="copy2" /><span>复制跨数据</span></div>
                <div className="flex items-center w-[86px] shrink-0 gap-[2px] text-[#a9a9a9]"><Ic n="paste" /><span>粘贴跨数据</span></div>
                <span className="w-[94px] shrink-0 text-[#8f8f8f]">输入当前列数据</span>
                <span className="w-[94px] shrink-0 text-[#8f8f8f]">删除当前列数据</span>
                <span className="w-[58px] shrink-0">页面设置</span>
                <span className="w-[71px] shrink-0">调换起始跨</span>
                <span>悬臂钢筋代号</span>
              </div>
              <div className="flex-1 min-h-0 mt-[2px] border border-[#a8a8a8] bg-white flex flex-col">
                <div className="flex-1 min-h-0 overflow-hidden">
                  <table className="table-fixed border-collapse w-[1180px]">
                    <colgroup>
                      {['w-[30px]', 'w-[42px]', 'w-[41px]', 'w-[41px]', 'w-[41px]', 'w-[41px]', 'w-[61px]', 'w-[80px]', 'w-[81px]', 'w-[81px]', 'w-[81px]', 'w-[81px]', 'w-[81px]', 'w-[81px]', 'w-[80px]', 'w-[101px]', 'w-[71px]', 'w-[65px]'].map((w, k) => <col key={k} className={w} />)}
                    </colgroup>
                    <thead>
                      <tr className="h-[19px]">
                        <Hd t="" rowSpan={2} />
                        <th rowSpan={2} className="font-normal text-[13px] border border-[#d9b26c] bg-linear-to-b from-[#fde3b5] to-[#f5c064] text-[#800080] p-0">跨号</th>
                        <Hd t="构件尺寸(mm)" colSpan={6} />
                        <Hd t="下通长筋" rowSpan={2} />
                        <Hd t="下部钢筋" colSpan={3} />
                        <Hd t="上部钢筋" colSpan={2} />
                        <Hd t="侧面钢筋" colSpan={3} />
                        <Hd t="箍筋" rowSpan={2} />
                      </tr>
                      <tr className="h-[19px]">
                        {['A2', 'A3', 'A4', '跨长', '截面(B*H)', '距左边线距离', '左支座钢筋', '跨中钢筋', '右支座钢筋', '上通长筋', '上部钢筋', '侧面通长筋', '侧面原位标注筋', '拉筋'].map((t, k) => <Hd key={k} t={t} />)}
                      </tr>
                    </thead>
                    <tbody>
                      <tr className="h-[20px]">
                        <td className="border border-[#e8c080] bg-[#fdd9a0] text-center text-[#800040] p-0 font-['Liberation_Mono',monospace] text-[11px]">1</td>
                        <td className="border-[3px] border-black bg-[#8cbbea] p-0 pl-px font-['Liberation_Sans',sans-serif]">1</td>
                        <Td t="(1200)" /><Td t="(1200)" /><Td t="(1200)" /><Td t="(6600)" /><Td t="(400*900)" /><Td t="(200)" /><Td t="5 Φ22" /><Td /><Td /><Td />
                        <Td t="5 Φ25" /><Td /><Td t="G4 Φ14" /><Td /><Td t="(Φ8)" cls="pl-[4px]" /><Td />
                      </tr>
                    </tbody>
                  </table>
                </div>
                <div className="h-[15px] shrink-0 bg-[#f0f0f0] flex items-center justify-between relative">
                  <ChevronLeft size={12} strokeWidth={3} className="ml-[1px] text-[#555] shrink-0" />
                  <div className="absolute left-[151px] top-0 h-full w-[510px] bg-[#cdcdcd]" />
                  <ChevronRight size={12} strokeWidth={3} className="mr-[2px] text-[#555] shrink-0" />
                </div>
              </div>
            </div>
          </div>
        </div>
      </div>
      {/* status */}
      <div className="h-[22px] shrink-0 flex items-center gap-[2px] px-px pt-[2px] text-[12px] bg-[#f0f0f0]">
        {[['w-[148px]', 'X=116294 Y=16224'], ['w-[78px]', '层高:2.15m'], ['w-[98px]', '底标高:-2.2m'], ['w-[48px]', '1(8)'], ['w-[913px]', '按鼠标左键选择梁图元,按右键或ESC退出;可以通过回车键及shift+"→←↑"光标键在跨之间、上下输入框之间进行切换'], ['flex-1', '574.2 FPS']].map(([w, t], k) => (
          <div key={k} className={`h-full bg-[#f7f7f7] border border-[#dedede] flex items-center pl-[1px] whitespace-nowrap overflow-hidden ${w}`}><Sim t={t} /></div>
        ))}
      </div>
      {/* taskbar */}
      <div className="h-10 shrink-0 bg-[#020c10] flex items-center text-white whitespace-nowrap">
        <div className="w-12 h-full bg-black flex items-center justify-center shrink-0">
          <svg viewBox="0 0 16 16" className="w-4 h-4"><path d="M0 2.200l6.800-1v6.300H0zM7.700 1.100L16 0v7.500H7.700zM0 8.400h6.800v6.300l-6.800-1zM7.700 8.400H16V16l-8.300-1.200z" fill="#fff" /></svg>
        </div>
        <div className="w-[344px] h-full bg-[#333] flex items-center shrink-0 text-[#8f8f8f] text-[13px]">
          <div className="ml-[10px] w-5 h-5 rounded-full border-2 border-white shrink-0" />
          <span className="ml-[6px]">在这里输入你要搜索的内容</span>
          <Mic size={17} strokeWidth={1.3} className="ml-[123px] shrink-0 text-[#bbb]" />
        </div>
        <div className="flex items-center h-full">
          <TaskIcon><svg viewBox="0 0 20 18" className="w-5 h-[18px]"><path d="M5 1h10v16H5zM3 4H1v10h2M17 4h2v10h-2" fill="none" stroke="#fff" /></svg></TaskIcon>
          <TaskIcon cls="w-[51px]"><svg viewBox="0 0 22 22" className="w-[22px] h-[22px]"><path d="M11 10C5 11 1 8 2 4s8-4 8 0zM12 10c-1-6 2-9 6-8s4 8 0 8zM12 12c6-1 9 2 8 6s-8 4-8 0zM10 12c1 6-2 9-6 8s-4-8 0-8z" fill="#e8e8e8" /></svg></TaskIcon>
          <TaskIcon cls="w-[53px]"><IeGlyph c="#f0f0f0" ring="#cfcfcf" /></TaskIcon>
          <TaskIcon cls="w-[52px]"><svg viewBox="0 0 28 24" className="w-7 h-6"><circle cx="11" cy="14" r="8" fill="none" stroke="#aaa" strokeWidth="1.500" /><circle cx="12" cy="15" r="4" fill="none" stroke="#aaa" /><path d="M17 10c0-4 1-7 4-7s4 3 4 7l2 2H15z" fill="#e8a317" /></svg></TaskIcon>
          <TaskIcon cls="w-[51px]"><IeGlyph c="#1577d4" /></TaskIcon>
          <TaskIcon><svg viewBox="0 0 22 20" className="w-[22px] h-5"><path d="M1 3h8l2 2h10v14H1z" fill="#f5c64f" /><path d="M7 10h8v9H7z" fill="#4fa6e8" /></svg></TaskIcon>
          <TaskIcon cls="w-[48px] relative"><IeGlyph c="#2a8ae0" ring="#f2c230" /><div className="absolute bottom-0 inset-x-[4px] h-0.5 bg-[#76b9ed]" /></TaskIcon>
          <TaskIcon cls="w-[49px] relative"><span className="text-[27px] font-['Liberation_Sans',sans-serif] font-bold leading-none text-[#1b86e0]">G</span><div className="absolute bottom-0 inset-x-[2px] h-0.5 bg-[#76b9ed]" /></TaskIcon>
          <TaskIcon cls="w-[48px] relative"><svg viewBox="0 0 24 24" className="w-6 h-6"><circle cx="12" cy="12" r="10" fill="#8cc63f" stroke="#dff0c0" /><path d="M6 12h12M7 9c3-4 8-4 10 0M7 15c3 4 8 4 10 0" fill="none" stroke="#fff" strokeWidth="2" /></svg><div className="absolute bottom-0 inset-x-[2px] h-0.5 bg-[#76b9ed]" /></TaskIcon>
          <TaskIcon cls="relative bg-[#2c3a42] w-[48px]"><svg viewBox="0 0 24 24" className="w-6 h-6"><rect width="24" height="24" rx="4" fill="#0f8fee" /><path d="M12 4v16M6 9c0 5 2 5 6 5s6 0 6-5" fill="none" stroke="#fff" strokeWidth="2.500" /></svg><div className="absolute bottom-0 inset-x-0 h-0.5 bg-[#76b9ed]" /></TaskIcon>
        </div>
        <span className="ml-[136px] text-[12px] text-[#ccc] shrink-0">链接</span>
        <ChevronUp size={16} strokeWidth={1.5} className="ml-[7px] shrink-0" />
        <svg viewBox="0 0 16 16" className="ml-[7px] w-4 h-4 shrink-0"><path d="M1 5h11v8H1z" fill="none" stroke="#fff" /><path d="M4 7h6v4H4zM5 1v4M8 1v4" stroke="#fff" fill="#fff" /></svg>
        <Wifi size={15} className="ml-[8px] shrink-0 text-[#ccc]" />
        <Volume1 size={16} strokeWidth={1.3} className="ml-[6px] shrink-0" />
        <Keyboard size={22} strokeWidth={1} className="ml-[13px] shrink-0" />
        <span className="ml-[10px] text-[14px] shrink-0">中</span>
        <div className="ml-[13px] w-[14px] h-[17px] rounded-[3px] bg-[#e8501e] flex items-center justify-center text-[13px] font-bold shrink-0 font-['Liberation_Sans',sans-serif] skew-x-[-6deg]">S</div>
        <div className="ml-[12px] w-[78px] shrink-0 flex flex-col items-center gap-[9px] text-[12px] text-[#ccc]">
          <span>18:49</span><span>2018/1/14</span>
        </div>
        <div className="relative ml-[8px] shrink-0 w-6 h-8">
          <svg viewBox="0 0 16 14" className="w-4 h-3.5 ml-[2px] mt-[10px]"><path d="M0 0h16v14H0z" fill="#fff" /><path d="M3 4h10M3 7h10M3 10h10" stroke="#333" /></svg>
          <div className="absolute left-[6px] top-[13px] w-5 h-5 rounded-full bg-[#555] text-[12px] font-bold flex items-center justify-center font-['Liberation_Sans',sans-serif]">21</div>
        </div>
      </div>

      {/* overlays */}
      <svg viewBox="0 0 1366 768" className="absolute inset-0 w-[1366px] h-[768px] pointer-events-none">
        <ellipse cx="948" cy="282" rx="273" ry="54" fill="none" stroke="#f00" strokeWidth="6" />
        <ellipse cx="821" cy="156" rx="76" ry="39" fill="none" stroke="#f00" strokeWidth="6" />
      </svg>
      <div className="absolute left-[765px] -top-[26px] w-[44px] h-[46px] rounded-full bg-linear-to-b from-[#7fd45f] to-[#3cab35] border border-[#8a8a8a] shadow flex items-end justify-center pb-[5px] text-white text-[12px] font-bold">65</div>
      <div className="absolute left-[842px] top-[6px] flex items-center">
        <div className="w-[26px] h-[26px] rounded-[5px] bg-[#f0561d] text-white text-[24px] font-bold flex items-center justify-center font-['Liberation_Sans',sans-serif] -rotate-[8deg] z-10">S</div>
        <div className="w-[179px] h-6 -mt-1 bg-white border border-[#b8c6d6] flex items-center text-[#1d7fd1] pl-[5px]">
          <span className="w-[24px] text-[15px] font-bold shrink-0">中</span>
          <span className="w-[18px] text-[13px] font-bold shrink-0">°,</span>
          <Smile size={17} className="shrink-0" />
          <Mic size={17} className="ml-[6px] shrink-0" fill="#1d7fd1" />
          <Keyboard size={18} className="ml-[5px] shrink-0" />
          <div className="ml-[4px] w-[18px] h-[18px] rounded-full bg-[#c5d0da] text-[7px] font-bold flex items-end justify-center text-white shrink-0">20</div>
          <Shirt size={17} className="ml-[3px] shrink-0" fill="#1d7fd1" />
          <Wrench size={17} className="ml-[5px] shrink-0" fill="#1d7fd1" />
        </div>
      </div>
    </div>
  );
}
